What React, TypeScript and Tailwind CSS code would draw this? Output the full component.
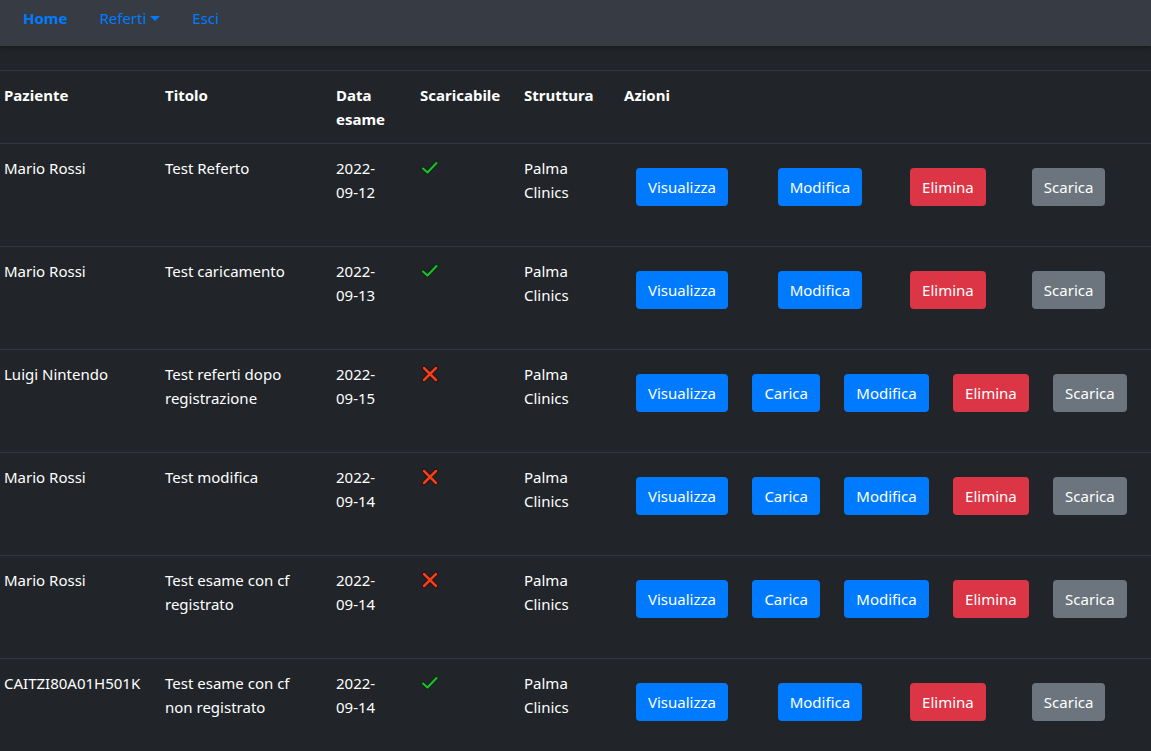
import React from 'react';

type Referto = {
  paziente: string;
  titolo: string;
  data: string;
  scaricabile: boolean;
  struttura: string;
};

const referti: Referto[] = [
  { paziente: 'Mario Rossi', titolo: 'Test Referto', data: '2022-09-12', scaricabile: true, struttura: 'Palma Clinics' },
  { paziente: 'Mario Rossi', titolo: 'Test caricamento', data: '2022-09-13', scaricabile: true, struttura: 'Palma Clinics' },
  { paziente: 'Luigi Nintendo', titolo: 'Test referti dopo registrazione', data: '2022-09-15', scaricabile: false, struttura: 'Palma Clinics' },
  { paziente: 'Mario Rossi', titolo: 'Test modifica', data: '2022-09-14', scaricabile: false, struttura: 'Palma Clinics' },
  { paziente: 'Mario Rossi', titolo: 'Test esame con cf registrato', data: '2022-09-14', scaricabile: false, struttura: 'Palma Clinics' },
  { paziente: 'CAITZI80A01H501K', titolo: 'Test esame con cf non registrato', data: '2022-09-14', scaricabile: true, struttura: 'Palma Clinics' },
];

function CheckIcon() {
  return (
    <svg width="18" height="14" viewBox="0 0 18 14" className="mt-[5px] ml-[1px]">
      <path d="M2 7.5 L6.5 11.5 L15.5 2" fill="none" stroke="#0b2a10" strokeWidth="4" strokeLinecap="round" strokeLinejoin="round" />
      <path d="M2 7.5 L6.5 11.5 L15.5 2" fill="none" stroke="#1fbf2f" strokeWidth="2" strokeLinecap="round" strokeLinejoin="round" />
    </svg>
  );
}

function CrossIcon() {
  return (
    <svg width="18" height="18" viewBox="0 0 18 18" className="mt-[3px] ml-[1px]">
      <path d="M3 3 L15 15 M15 3 L3 15" fill="none" stroke="#2a0d08" strokeWidth="4.5" strokeLinecap="round" />
      <path d="M3 3 L15 15 M15 3 L3 15" fill="none" stroke="#f0401c" strokeWidth="2.5" strokeLinecap="round" />
    </svg>
  );
}

function Btn({ label, color }: { label: string; color: string }) {
  return (
    <button className={`h-[38px] px-3 rounded-[4px] text-white text-[15px] leading-6 whitespace-nowrap ${color}`}>
      {label}
    </button>
  );
}

export default function App() {
  return (
    <div className="min-h-screen bg-[#212529] text-white font-['Noto_Sans',sans-serif] text-[15px] leading-6">
      {/* Navbar */}
      <nav className="h-[46px] bg-[#373b43] flex items-start pt-[6px] pl-[23px] gap-8 shadow-[0_2px_4px_rgba(0,0,0,0.25)]">
        <a className="text-[#007bff] font-bold">Home</a>
        <a className="text-[#007bff] flex items-center">
          Referti
          <span className="ml-[4px] mt-[1px] w-0 h-0 border-l-[5px] border-r-[5px] border-t-[5px] border-l-transparent border-r-transparent border-t-[#007bff]" />
        </a>
        <a className="text-[#007bff]">Esci</a>
      </nav>

      {/* Tabella referti */}
      <table className="w-full table-fixed mt-6 border-collapse">
        <colgroup>
          <col className="w-[153px]" />
          <col className="w-[171px]" />
          <col className="w-[84px]" />
          <col className="w-[104px]" />
          <col className="w-[100px]" />
          <col />
        </colgroup>
        <thead>
          <tr className="border-t border-b border-[#32383e] text-left align-top">
            <th className="pl-1 pr-3 py-3 font-bold">Paziente</th>
            <th className="p-3 font-bold">Titolo</th>
            <th className="p-3 font-bold">Data esame</th>
            <th className="p-3 font-bold">Scaricabile</th>
            <th className="p-3 font-bold">Struttura</th>
            <th className="p-3 font-bold">Azioni</th>
          </tr>
        </thead>
        <tbody>
          {referti.map((r, i) => (
            <tr key={i} className="border-b border-[#32383e] align-top">
              <td className="pl-1 pr-3 py-3 whitespace-nowrap">{r.paziente}</td>
              <td className="p-3">{r.titolo}</td>
              <td className="p-3">{r.data}</td>
              <td className="p-3">{r.scaricabile ? <CheckIcon /> : <CrossIcon />}</td>
              <td className="p-3">{r.struttura}</td>
              <td className="p-3">
                <table className="w-full mb-4 border-collapse">
                  <tbody>
                    <tr className="align-top">
                      <td className="p-3">
                        <Btn label="Visualizza" color="bg-[#007bff]" />
                      </td>
                      {!r.scaricabile && (
                        <td className="p-3">
                          <Btn label="Carica" color="bg-[#007bff]" />
                        </td>
                      )}
                      <td className="p-3">
                        <Btn label="Modifica" color="bg-[#007bff]" />
                      </td>
                      <td className="p-3">
                        <Btn label="Elimina" color="bg-[#dc3545]" />
                      </td>
                      <td className="p-3">
                        <Btn label="Scarica" color="bg-[#6c757d]" />
                      </td>
                    </tr>
                  </tbody>
                </table>
              </td>
            </tr>
          ))}
        </tbody>
      </table>
    </div>
  );
}
